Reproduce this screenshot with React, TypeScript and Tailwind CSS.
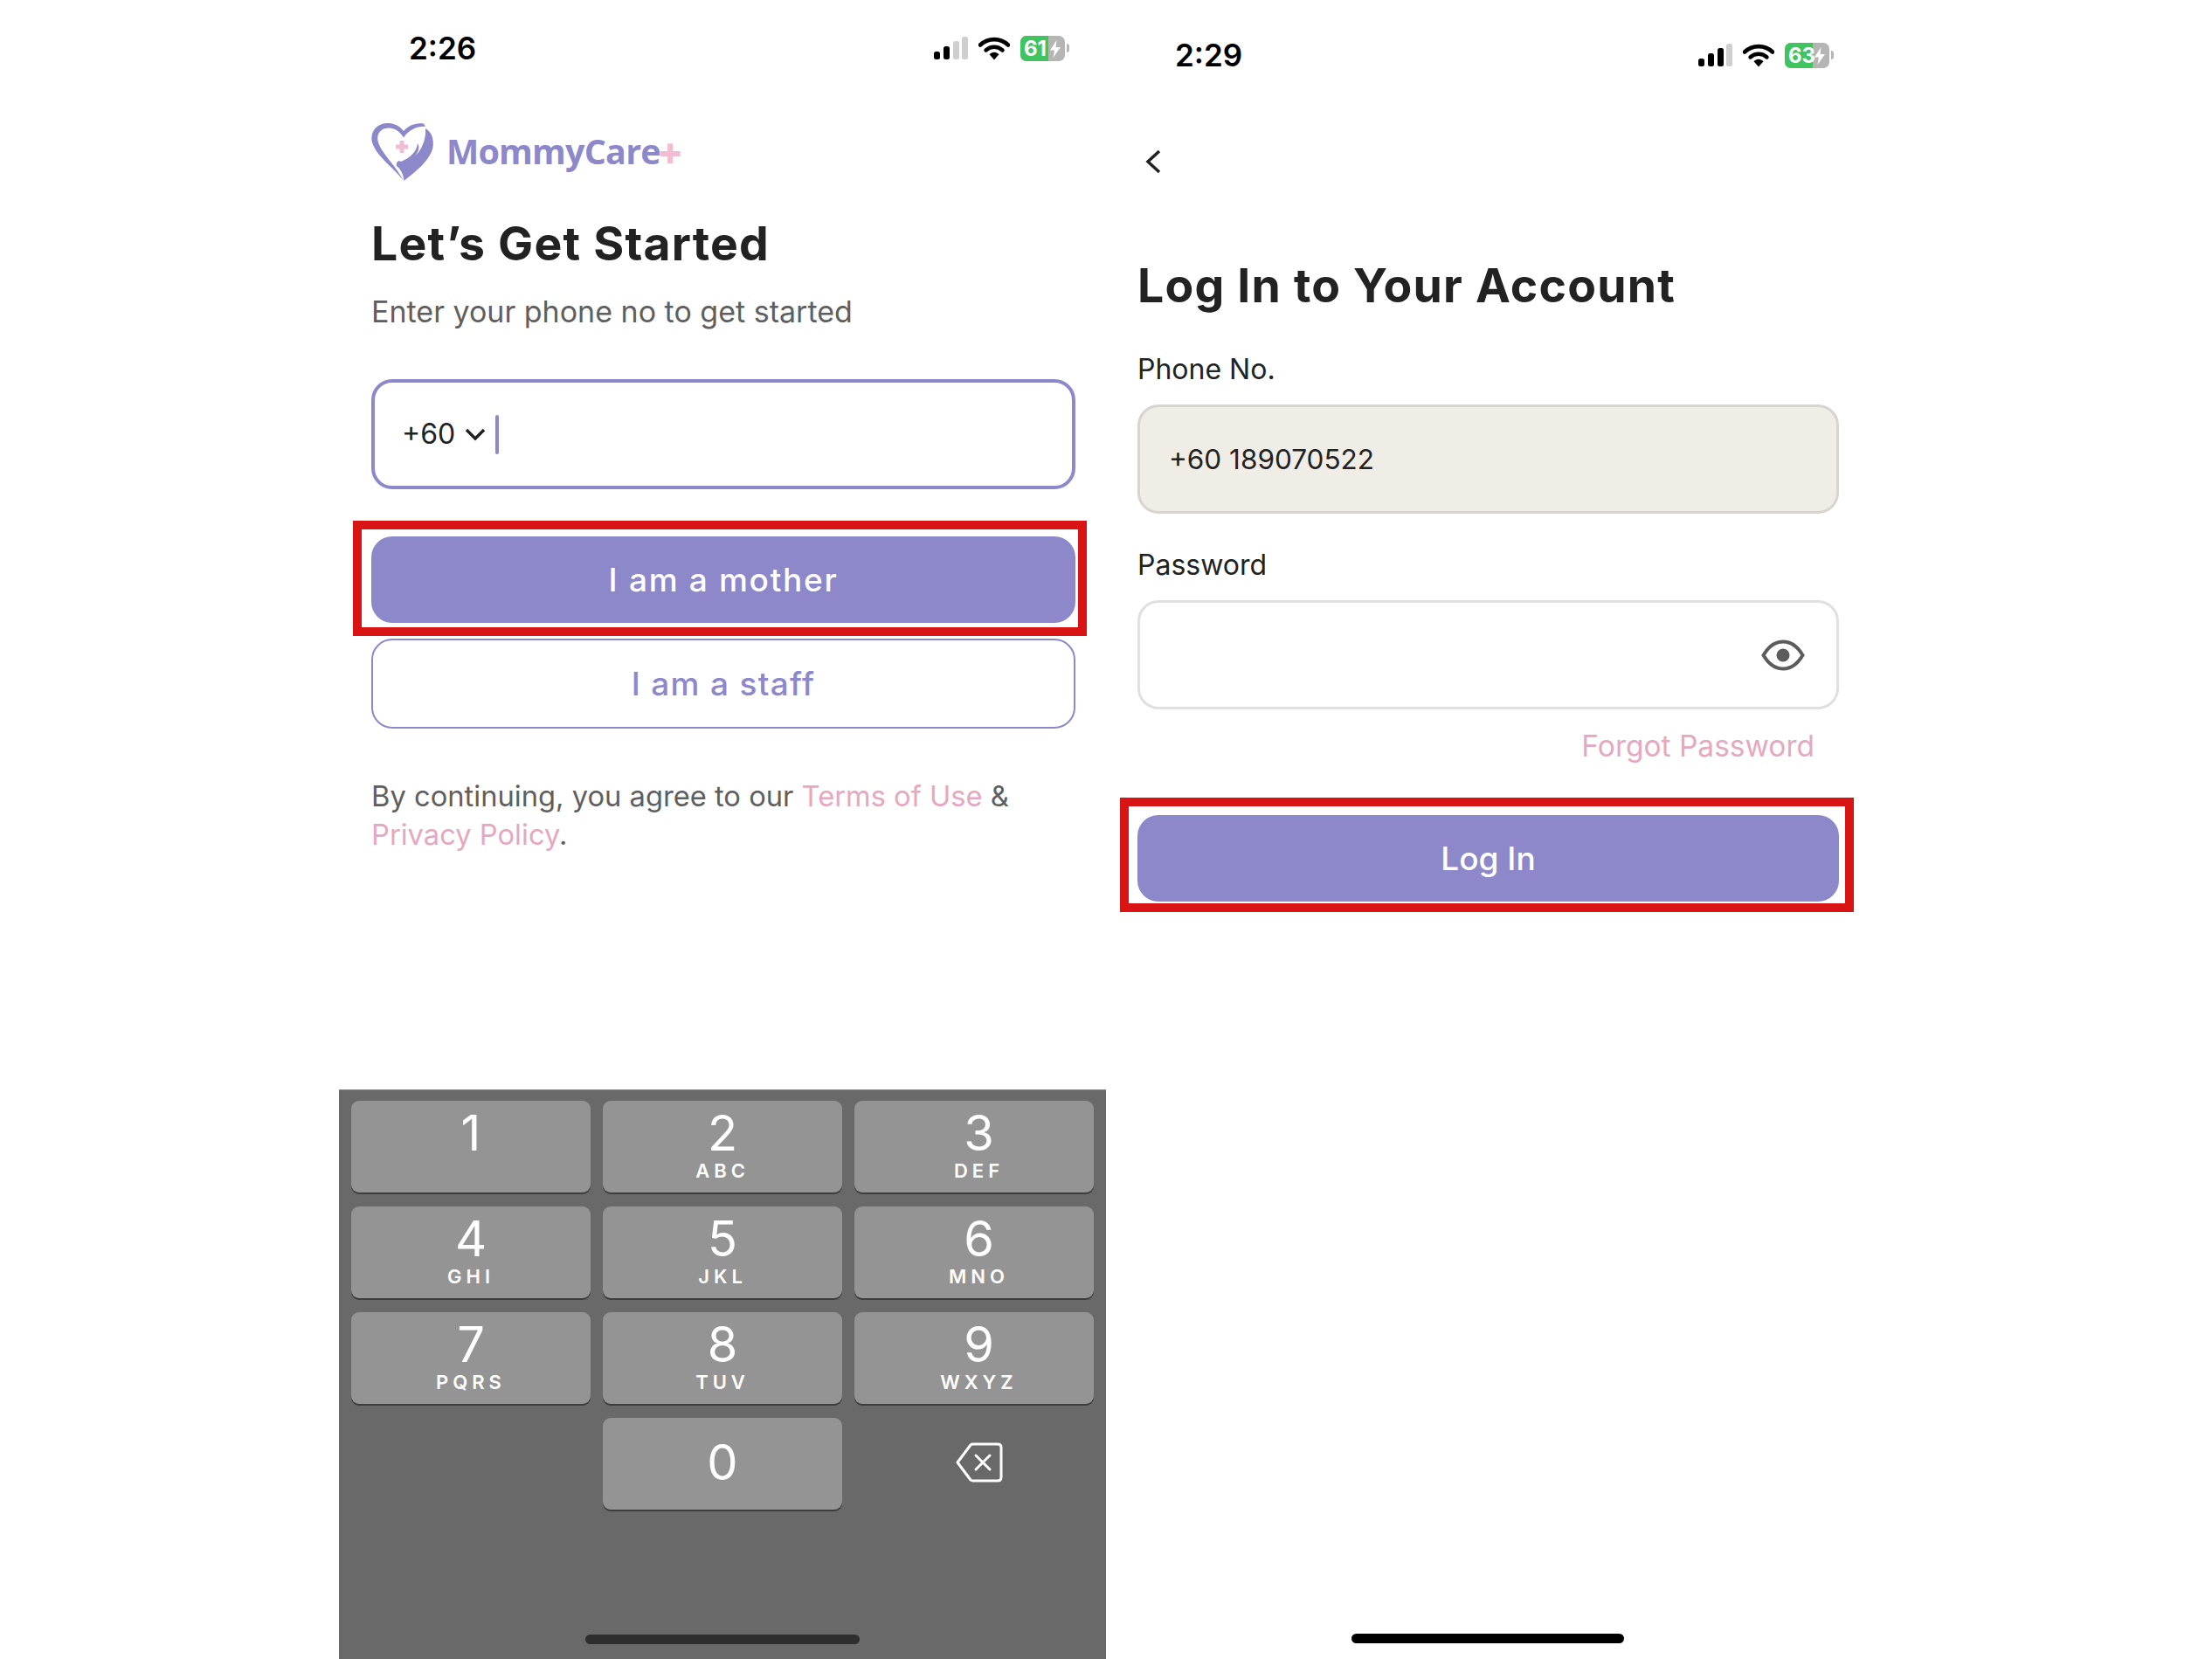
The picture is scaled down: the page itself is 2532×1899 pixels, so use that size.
const poppins = "font-['Inter','Noto_Sans',sans-serif]";

function Signal({ active }: { active: number }) {
  const bars = [
    { x: 0, y: 17, h: 9 },
    { x: 11, y: 11, h: 15 },
    { x: 22, y: 5, h: 21 },
    { x: 32, y: 0, h: 26 },
  ];
  return (
    <svg width="39" height="26" viewBox="0 0 39 26">
      {bars.map((b, i) => (
        <rect key={b.x} x={b.x} y={b.y} width="7" height={b.h} rx="2.5" fill={i < active ? '#000' : '#cfcfcf'} />
      ))}
    </svg>
  );
}

function Wifi() {
  return (
    <svg width="36" height="27" viewBox="0 0 36 27">
      <path d="M2 9.5 C11 1 25 1 34 9.5" fill="none" stroke="#000" strokeWidth="4.6" strokeLinecap="round" />
      <path d="M8.5 15.5 C14 10.5 22 10.5 27.5 15.5" fill="none" stroke="#000" strokeWidth="4.4" strokeLinecap="round" />
      <path d="M12.5 20.2 C15.5 16.8 20.5 16.8 23.5 20.2 L18 26.5 Z" fill="#000" />
    </svg>
  );
}

function Battery({ level }: { level: string }) {
  return (
    <div className="flex items-center gap-[2px]">
      <div className="relative flex h-[29px] w-[51px] overflow-hidden rounded-[7px] bg-[#b5b5b5]">
        <div className="w-[32px] bg-[#3fc45f]" />
        <span className="absolute left-[4px] top-0 font-['Inter',sans-serif] text-[24px] leading-[29px] font-bold text-white">{level}</span>
        <svg className="absolute left-[33px] top-[5px]" width="14" height="20" viewBox="0 0 14 20">
          <path d="M8.5 0 L1 11.5 H6 L4.5 20 L13 8 H7.5 Z" fill="#fff" />
        </svg>
      </div>
      <div className="h-[10px] w-[3px] rounded-r-full bg-[#b5b5b5]" />
    </div>
  );
}

function StatusBar({ time, level, active, className }: { time: string; level: string; active: number; className: string }) {
  return (
    <div className={`flex items-center justify-between ${className}`}>
      <span className="font-['Inter',sans-serif] text-[35px] leading-[40px] font-semibold text-black">{time}</span>
      <div className="flex items-center gap-[12px]">
        <Signal active={active} />
        <Wifi />
        <Battery level={level} />
      </div>
    </div>
  );
}

function Logo() {
  return (
    <div className="flex items-center gap-[14px]">
      <svg width="72" height="69" viewBox="0 0 72 69">
        <path
          d="M37 68 C27 54 4 39 0.5 22 C-1 9 9 1 20 2 C28 2.500 33 6 37 11 C42 5 50 1 60 2.500 L62 6 C52 5 43 10 37 18.500 C32 11 27 7.500 20 7.500 C12 7.500 6 13 7.500 22 C10 35 28 50 37 68 Z"
          fill="#8c88ca"
        />
        <path
          d="M62 8 C69 12 72 20 70.500 30 C67 45 50 58 37.500 68 C37 61 34 55 29 51 C28 47 31 44 34 46 C44 42 52 35 53 25 C57 31 52 40 44 44 C55 38 63 24 62 8 Z"
          fill="#8c88ca"
        />
        <path d="M32.500 22 H37.500 V26.500 H42 V31.500 H37.500 V36 H32.500 V31.500 H28 V26.500 H32.500 Z" fill="#f2bcd2" />
      </svg>
      <span className="flex items-center font-['Open_Sans',sans-serif] text-[39.5px] leading-none font-bold tracking-[-0.8px] text-[#8c88ca]">
        MommyCare
        <span className="-ml-[2px] text-[46px] font-extrabold text-[#f2bcd2]">+</span>
      </span>
    </div>
  );
}

// red annotation frame drawn over the primary button
function RedFrame({ className }: { className: string }) {
  return <div className={`pointer-events-none absolute border-[10px] border-[#d81414] ${className}`} />;
}

const keys = [
  ['1', ''],
  ['2', 'ABC'],
  ['3', 'DEF'],
  ['4', 'GHI'],
  ['5', 'JKL'],
  ['6', 'MNO'],
  ['7', 'PQRS'],
  ['8', 'TUV'],
  ['9', 'WXYZ'],
];

function Keypad() {
  return (
    <div className="mt-auto flex h-[652px] flex-col border-t border-[#8a8a8a] bg-[#696969] px-[14px] pt-[12px]">
      <div className="grid grid-cols-3 gap-x-[14px] gap-y-[16px]">
        {keys.map(([num, letters], i) => (
          <div
            key={num}
            className={`flex h-[105px] flex-col items-center rounded-[9px] bg-[#949494] pt-[10px] text-white shadow-[0_2px_0_#3d3d3d] ${i % 3 === 2 ? 'pl-[11px]' : ''}`}
          >
            <span className="font-['Inter',sans-serif] text-[56px] leading-[54px] font-normal">{num}</span>
            <span className="mt-[4px] font-['Inter',sans-serif] text-[22px] leading-[24px] font-semibold tracking-[5px]">{letters}</span>
          </div>
        ))}
        <div />
        <div className="flex h-[105px] items-center justify-center rounded-[9px] bg-[#949494] pb-[4px] font-['Inter',sans-serif] text-[56px] font-normal text-white shadow-[0_2px_0_#3d3d3d]">
          0
        </div>
        <div className="flex h-[105px] items-center justify-center pb-[4px] pl-[12px]">
          <svg width="54" height="46" viewBox="0 0 54 46" fill="none" stroke="#fff" strokeWidth="3" strokeLinejoin="round" strokeLinecap="round">
            <path d="M2 23 L17 3 Q18 2 20 2 H48 Q52 2 52 6 V40 Q52 44 48 44 H20 Q18 44 17 43 Z" />
            <path d="M23 15 L39 31 M39 15 L23 31" />
          </svg>
        </div>
      </div>
      <div className="mt-auto mb-[17px] h-[11px] w-[314px] self-center rounded-full bg-[#2e2e2e]" />
    </div>
  );
}

function StartScreen() {
  return (
    <section className="flex h-[1899px] w-[878px] shrink-0 flex-col">
      <StatusBar time="2:26" level="61" active={2} className="pt-[35px] pr-[42px] pl-[80px]" />
      <div className="flex flex-col px-[37px]">
        <div className="mt-[64px]"><Logo /></div>
        <h1 className="mt-[38px] text-[53.5px] leading-[66px] font-bold tracking-[1.2px] text-[#222222]">Let’s Get Started</h1>
        <p className="mt-[22px] text-[34px] leading-[46px] text-[#5f5f5f]">Enter your phone no to get started</p>
        <div className="mt-[54px] flex h-[126px] w-[806px] items-center rounded-[24px] border-[4px] border-[#8c88ca] pl-[31px]">
          <span className="text-[32px] text-[#222222]">+60</span>
          <svg className="ml-[11px]" width="24" height="16" viewBox="0 0 24 16" fill="none" stroke="#222" strokeWidth="3.500">
            <path d="M2 3 L12 13 L22 3" />
          </svg>
          <div className="ml-[11px] h-[45px] w-[4px] rounded-full bg-[#8c88ca]" />
        </div>
        <div className="relative mt-[54px] w-[806px]">
          <RedFrame className="-top-[18px] -right-[13px] -bottom-[15px] -left-[21px]" />
          <button className="block h-[99px] w-full rounded-[24px] bg-[#8c88ca] text-[37px] font-medium tracking-[1.7px] text-white">I am a mother</button>
        </div>
        <button className="mt-[18px] h-[103px] w-[806px] rounded-[24px] border-2 border-[#8c88ca] text-[37px] font-medium tracking-[1.3px] text-[#8c88ca]">I am a staff</button>
        <p className="mt-[55px] w-[806px] text-[32.7px] leading-[44px] text-[#5f5f5f]">
          By continuing, you agree to our <span className="text-[#e6a8c0]">Terms of Use</span> &amp;
          <br />
          <span className="text-[#e6a8c0]">Privacy Policy</span>.
        </p>
      </div>
      <Keypad />
    </section>
  );
}

function LoginScreen() {
  return (
    <section className="flex h-[1899px] w-[874px] shrink-0 flex-col">
      <StatusBar time="2:29" level="63" active={3} className="pt-[43px] pr-[41px] pl-[79px]" />
      <div className="flex flex-col px-[36px]">
        <svg className="mt-[88px] ml-[8px]" width="20" height="28" viewBox="0 0 20 28" fill="none" stroke="#222" strokeWidth="3.500">
          <path d="M17 2 L4 14 L17 26" />
        </svg>
        <h1 className="mt-[95px] text-[53.5px] leading-[66px] font-bold tracking-[1.2px] text-[#222222]">Log In to Your Account</h1>
        <label className="mt-[40px] text-[32px] leading-[46px] text-[#222222]">Phone No.</label>
        <div className="mt-[17px] flex h-[125px] w-[803px] items-center rounded-[24px] border-[3px] border-[#d8d5ce] bg-[#f0ece6] pl-[33px] text-[31.5px] text-[#222222]">
          +60 189070522
        </div>
        <label className="mt-[36px] text-[32px] leading-[46px] text-[#222222]">Password</label>
        <div className="mt-[17px] flex h-[125px] w-[803px] items-center justify-end rounded-[24px] border-[3px] border-[#e0e0e0] pr-[36px]">
          <svg width="50" height="36" viewBox="0 0 50 36" fill="none" stroke="#5c5c5c" strokeWidth="4">
            <path d="M2.500 18 C9 7 16 2.500 25 2.500 C34 2.500 41 7 47.500 18 C41 29 34 33.500 25 33.500 C16 33.500 9 29 2.500 18 Z" />
            <circle cx="25" cy="18" r="7.500" fill="#5c5c5c" stroke="none" />
          </svg>
        </div>
        <a className="mt-[19px] w-[775px] text-right text-[33.5px] leading-[46px] text-[#e6a8c0]">Forgot Password</a>
        <div className="relative mt-[56px] w-[803px]">
          <RedFrame className="-top-[20px] -right-[17px] -bottom-[12px] -left-[20px]" />
          <button className="block h-[99px] w-full rounded-[24px] bg-[#8c88ca] text-[37px] font-medium text-white">Log In</button>
        </div>
      </div>
      <div className="mt-auto mb-[18px] h-[11px] w-[312px] self-center rounded-full bg-black" />
    </section>
  );
}

export default function App() {
  return (
    <div className={`flex h-[1899px] w-[2532px] overflow-hidden bg-white pl-[388px] ${poppins}`}>
      <StartScreen />
      <LoginScreen />
    </div>
  );
}
